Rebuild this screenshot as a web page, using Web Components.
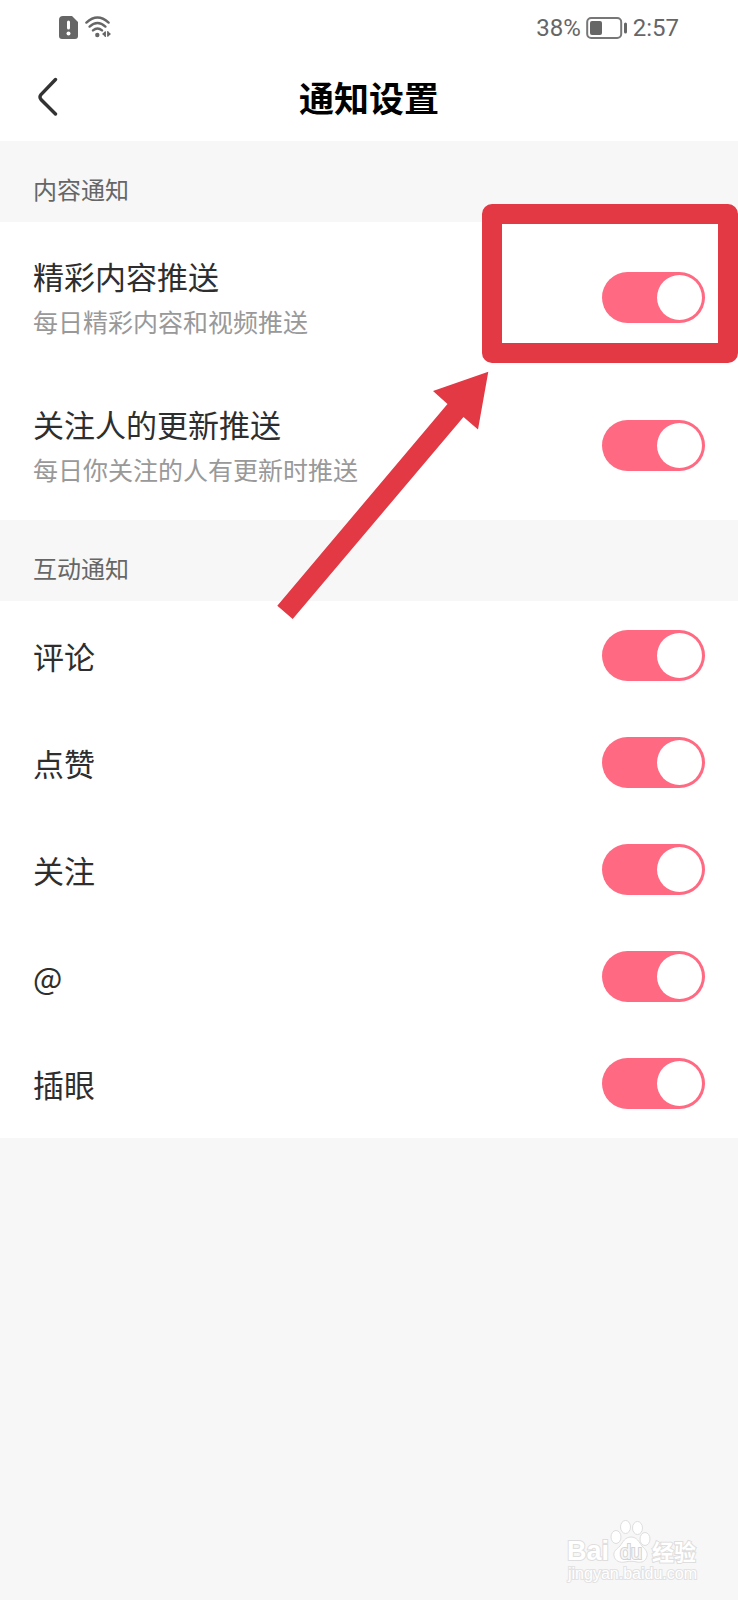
<!DOCTYPE html>
<html lang="zh-CN">
<head>
  <meta charset="UTF-8">
  <meta name="viewport" content="width=device-width, initial-scale=1.0">
  <title>通知设置</title>
  <style>
    body {
      margin: 0;
      background: #f7f7f7;
      color: #2e2e2e;
      font-family: "Noto Sans CJK SC", sans-serif;
    }
  </style>
</head>
<body>
  <settings-page>
    <status-bar battery="38" time="2:57"></status-bar>
    <nav-header>通知设置</nav-header>
    <setting-group heading="内容通知">
      <setting-item>精彩内容推送<span slot="hint">每日精彩内容和视频推送</span></setting-item>
      <setting-item>关注人的更新推送<span slot="hint">每日你关注的人有更新时推送</span></setting-item>
    </setting-group>
    <setting-group heading="互动通知">
      <setting-item>评论</setting-item>
      <setting-item>点赞</setting-item>
      <setting-item>关注</setting-item>
      <setting-item>@</setting-item>
      <setting-item>插眼</setting-item>
    </setting-group>
    <guide-mark slot="overlay"></guide-mark>
    <water-mark slot="overlay"></water-mark>
  </settings-page>

  <script>
    class SettingsPage extends HTMLElement {
      constructor() {
        super();
        this.shadowDOM = this.attachShadow({ mode: "open" });
        this.shadowDOM.innerHTML = `
          <style>
          :host {
            display: block;
            position: relative;
            min-height: 100vh;
            overflow: hidden;
          }
          main {
            display: flex;
            flex-direction: column;
          }
          </style>
          <main><slot></slot></main>
          <slot name="overlay"></slot>
        `;
      }
    }

    class StatusBar extends HTMLElement {
      constructor() {
        super();
        this.shadowDOM = this.attachShadow({ mode: "open" });
      }

      connectedCallback() {
        this.render();
      }

      render() {
        this.shadowDOM.innerHTML = `
          <style>
          :host {
            display: flex;
            align-items: center;
            justify-content: space-between;
            padding: 14px 59px;
            background: #fff;
            color: #666;
            font: 24px/28px Roboto, sans-serif;
          }
          div {
            display: flex;
            align-items: center;
            gap: 7px;
          }
          .power {
            gap: 5px;
          }
          svg {
            display: block;
          }
          </style>
          <div>
            <svg width="19" height="24" viewBox="0 0 19 24">
              <path fill="#666" d="M4 0h9l6 6v14a3 3 0 0 1-3 3H3a3 3 0 0 1-3-3V4a4 4 0 0 1 4-4z"/>
              <path stroke="#fff" stroke-width="3" stroke-linecap="round" d="M9.5 6v6"/>
              <circle cx="9.5" cy="17.5" r="2" fill="#fff"/>
            </svg>
            <svg width="26" height="24" viewBox="0 0 26 24" fill="none" stroke="#666" stroke-width="2.4" stroke-linecap="round">
              <path d="M1.4 6.6Q12.5-3.6 23.6 6.6M4.6 10.6Q12.5 3.6 20.4 10.6M8 14.4Q12.5 10.6 17 14.4"/>
              <circle cx="12.3" cy="19" r="2.2" fill="#666" stroke="none"/>
              <path fill="#666" stroke="none" d="M17 18l3.5-3v6zM26 18l-3.5-3v6z"/>
              <path stroke-width="1.2" d="M20.3 16v4.5M22.8 15.5v4.5"/>
            </svg>
          </div>
          <div class="power">
            <span>${this.getAttribute("battery")}%</span>
            <svg width="42" height="24" viewBox="0 0 42 24">
              <rect x="1.2" y="2" width="34" height="20" rx="4" fill="none" stroke="#777" stroke-width="2"/>
              <rect x="4" y="5" width="12" height="14" rx="2" fill="#666"/>
              <rect x="38" y="6.5" width="3" height="11" rx="1.5" fill="#666"/>
            </svg>
            <span>${this.getAttribute("time")}</span>
          </div>
        `;
      }
    }

    class NavHeader extends HTMLElement {
      constructor() {
        super();
        this.shadowDOM = this.attachShadow({ mode: "open" });
        this.shadowDOM.innerHTML = `
          <style>
          :host {
            display: grid;
            grid-template-columns: 48px 1fr 48px;
            align-items: center;
            padding: 17px 24px 20px;
            background: #fff;
          }
          button {
            width: 48px;
            height: 48px;
            padding: 0;
            border: 0;
            background: none;
          }
          svg {
            display: block;
            margin: auto;
          }
          h1 {
            margin: 0;
            color: #000;
            font-size: 35px;
            line-height: 48px;
            font-weight: 700;
            text-align: center;
          }
          </style>
          <button type="button" aria-label="返回">
            <svg width="22" height="40" viewBox="0 0 22 40" fill="none" stroke="#333" stroke-width="3.4" stroke-linecap="round">
              <path d="M18.5 2.5L4 17.5Q2 20 4 22.5L18.5 37"/>
            </svg>
          </button>
          <h1><slot></slot></h1>
        `;
      }
    }

    class SettingGroup extends HTMLElement {
      constructor() {
        super();
        this.shadowDOM = this.attachShadow({ mode: "open" });
      }

      connectedCallback() {
        this.render();
      }

      render() {
        this.shadowDOM.innerHTML = `
          <style>
          :host {
            display: block;
          }
          h2 {
            margin: 0;
            padding: 30px 33px 15px;
            color: #666;
            font-size: 24px;
            line-height: 36px;
            font-weight: 400;
          }
          .list {
            display: flex;
            flex-direction: column;
            padding: 1px 0;
            background: #fff;
          }
          </style>
          <section>
            <h2>${this.getAttribute("heading")}</h2>
            <div class="list"><slot></slot></div>
          </section>
        `;
      }
    }

    class SettingItem extends HTMLElement {
      constructor() {
        super();
        this.shadowDOM = this.attachShadow({ mode: "open" });
        this.shadowDOM.innerHTML = `
          <style>
          :host {
            display: block;
          }
          label {
            display: flex;
            align-items: center;
            justify-content: space-between;
            padding: 28px 33px;
          }
          .text {
            display: flex;
            flex-direction: column;
          }
          .title {
            font-size: 31px;
            line-height: 49px;
          }
          .hint {
            color: #999;
            font-size: 25px;
            line-height: 43px;
          }
          /* the switch: a pink track with the knob on the right when on */
          input {
            appearance: none;
            display: flex;
            align-items: center;
            flex: none;
            width: 103px;
            height: 51px;
            margin: 0;
            padding: 3px;
            box-sizing: border-box;
            border-radius: 26px;
            background: #ddd;
          }
          input::before {
            content: "";
            width: 45px;
            height: 45px;
            border-radius: 50%;
            background: #fff;
          }
          input:checked {
            justify-content: flex-end;
            background: #ff6981;
          }
          </style>
          <label>
            <span class="text">
              <span class="title"><slot></slot></span>
            </span>
            <input type="checkbox" role="switch" checked>
          </label>
        `;
      }

      connectedCallback() {
        if (this.querySelector("[slot=hint]") && !this.shadowDOM.querySelector(".hint")) {
          const hint = document.createElement("span");
          hint.className = "hint";
          hint.innerHTML = `<slot name="hint"></slot>`;
          this.shadowDOM.querySelector(".text").append(hint);
        }
      }
    }

    class GuideMark extends HTMLElement {
      constructor() {
        super();
        this.shadowDOM = this.attachShadow({ mode: "open" });
        this.shadowDOM.innerHTML = `
          <style>
          :host {
            display: block;
            position: absolute;
            top: 204px;
            right: 0;
            pointer-events: none;
          }
          svg {
            display: block;
          }
          </style>
          <svg width="461" height="416" viewBox="0 0 461 416">
            <rect x="215" y="10" width="236" height="139" fill="none" stroke="#e23944" stroke-width="20" stroke-linejoin="round"/>
            <path fill="#e23944" d="M211.3 167.7L156 187l14.5 13L.3 401.7 15.7 415 186.5 213l14.5 12.5z"/>
          </svg>
        `;
      }
    }

    class WaterMark extends HTMLElement {
      constructor() {
        super();
        this.shadowDOM = this.attachShadow({ mode: "open" });
        this.shadowDOM.innerHTML = `
          <style>
          :host {
            display: block;
            position: absolute;
            right: 32px;
            bottom: 14px;
            pointer-events: none;
          }
          svg {
            display: block;
          }
          text {
            font-family: "Liberation Sans", "Noto Sans CJK SC", sans-serif;
            paint-order: stroke;
          }
          .brand {
            font-weight: 700;
          }
          </style>
          <svg width="140" height="68" viewBox="0 0 140 68" fill="#fff" stroke="#dedede" stroke-width="2">
            <text class="brand" x="1" y="42" font-size="27">Bai</text>
            <g stroke-width="1">
              <ellipse cx="50" cy="19" rx="5" ry="6.5"/>
              <ellipse cx="59.5" cy="9" rx="5" ry="6.5"/>
              <ellipse cx="71.5" cy="10" rx="5" ry="6.5"/>
              <ellipse cx="79" cy="21" rx="5" ry="6.5"/>
              <path d="M65 19c6 0 8 5 11 9 3 3 6 6 5 10-1 5-5 7-10 6-4-1-8-1-12 0-5 1-10-1-11-6-1-5 3-7 6-10 3-4 5-9 11-9z"/>
            </g>
            <text x="54" y="41" font-size="20" fill="#f7f7f7" stroke="#d4d4d4">du</text>
            <text class="brand" x="86" y="42" font-size="22">经验</text>
            <text x="2" y="61" font-size="16" stroke="#e2e2e2">jingyan.baidu.com</text>
          </svg>
        `;
      }
    }

    customElements.define("settings-page", SettingsPage);
    customElements.define("status-bar", StatusBar);
    customElements.define("nav-header", NavHeader);
    customElements.define("setting-group", SettingGroup);
    customElements.define("setting-item", SettingItem);
    customElements.define("guide-mark", GuideMark);
    customElements.define("water-mark", WaterMark);
  </script>
</body>
</html>
